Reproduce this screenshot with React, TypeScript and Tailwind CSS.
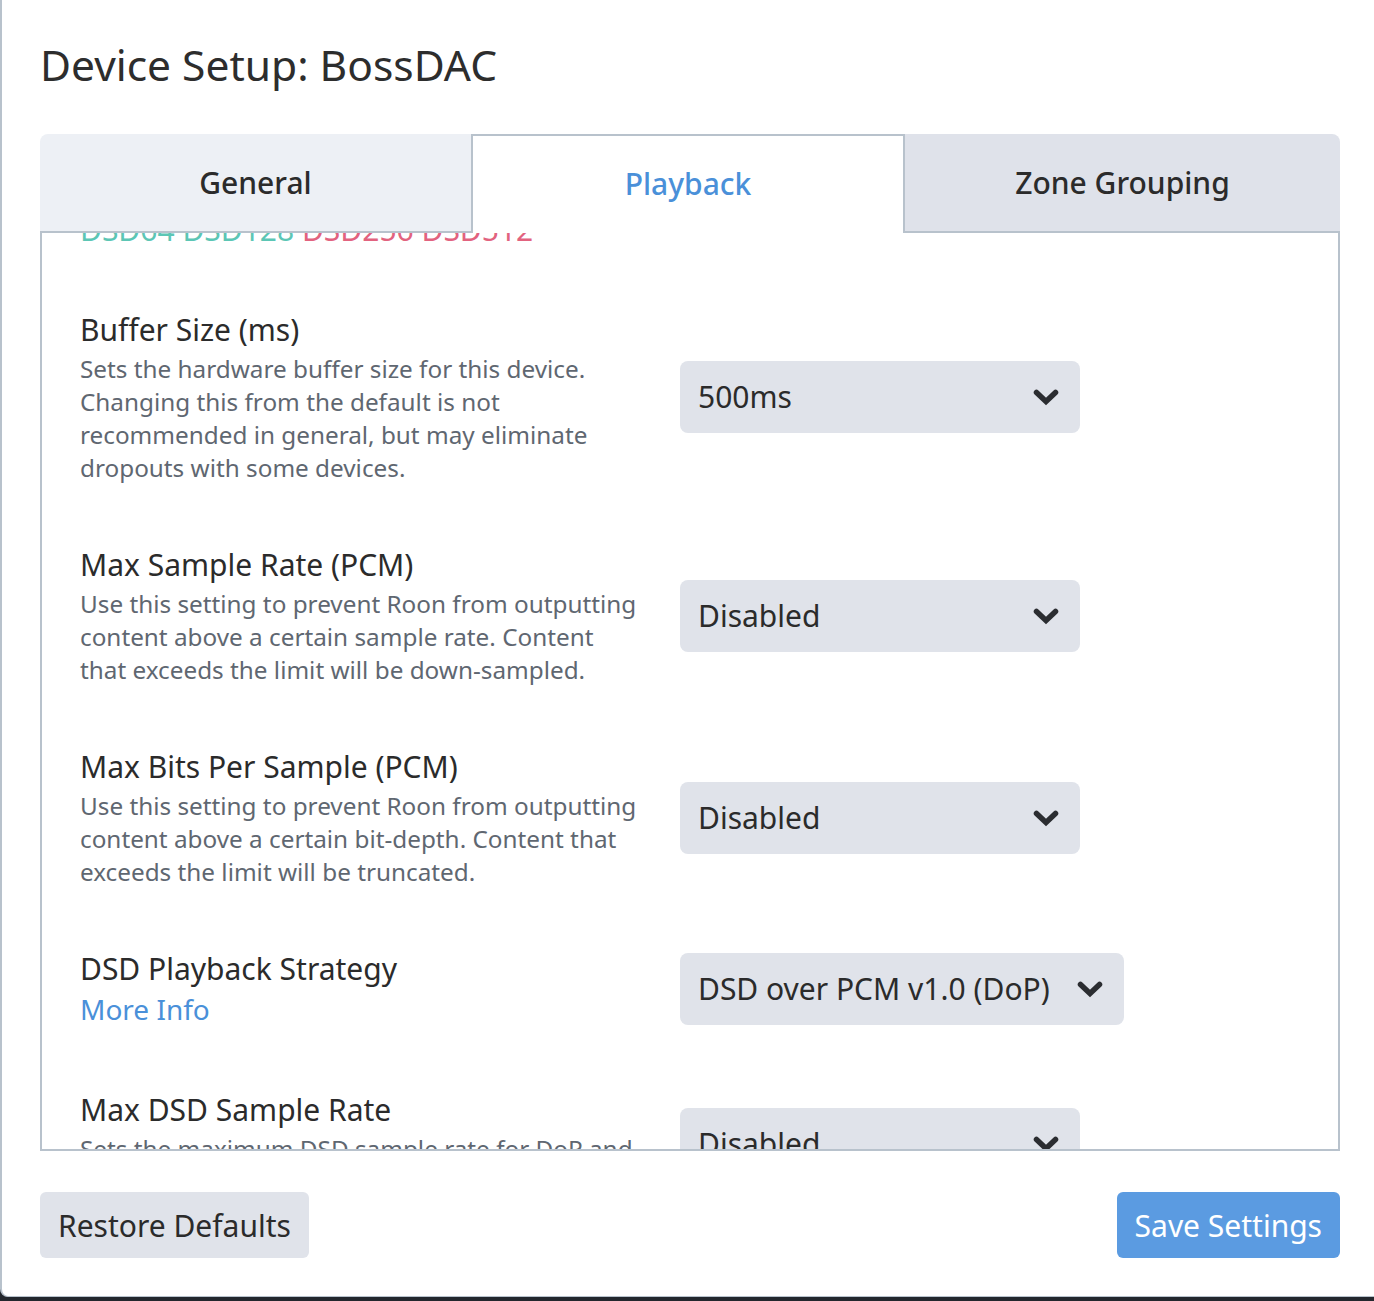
import React from "react";

function Chevron() {
  return (
    <svg width="26" height="18" viewBox="0 0 26 18" className="shrink-0">
      <path
        d="M3.5 4.5 L13 13.5 L22.5 4.5"
        fill="none"
        stroke="#2b2d31"
        strokeWidth="5.5"
        strokeLinecap="round"
        strokeLinejoin="miter"
      />
    </svg>
  );
}

function Select({ value }: { value: string }) {
  return (
    <div className="inline-flex h-[72px] min-w-[400px] items-center justify-between gap-[27px] rounded-[8px] bg-[#e0e3ea] pl-[18px] pr-[21px]">
      <span className="text-[30px] leading-[40px] text-[#2b2b2b]">{value}</span>
      <Chevron />
    </div>
  );
}

function Row({
  label,
  desc,
  link,
  value,
}: {
  label: string;
  desc?: string;
  link?: string;
  value: string;
}) {
  return (
    <div className="flex items-center">
      <div className="w-[600px] shrink-0">
        <div className="text-[30px] leading-[40px] text-[#2b2b2b]">{label}</div>
        {desc && (
          <div className="w-[560px] pt-[2px] text-[24.3px] leading-[33px] text-[#5f6771]">{desc}</div>
        )}
        {link && (
          <div className="text-[28px] leading-[40px] text-[#4a90d9]">{link}</div>
        )}
      </div>
      <div>
        <Select value={value} />
      </div>
    </div>
  );
}

export default function App() {
  return (
    <div className="h-[1301px] w-[1374px] bg-[#23272d] font-['Noto_Sans',sans-serif]">
      <div className="h-[1297px] w-[1374px] rounded-bl-[8px] border-b-[1px] border-l-[2px] border-[#b8c2cc] bg-white pl-[38px]">
        <h1 className="pt-[35px] text-[42.5px] leading-[60px] text-[#2d2d2d]">Device Setup: BossDAC</h1>

        <div className="mt-[39px] w-[1300px]">
          <div className="grid h-[99px] grid-cols-[431px_434px_435px]">
            <div className="flex items-center justify-center rounded-tl-[8px] border-b-[2px] border-[#b8c2cc] bg-[#edf0f5] text-[30px] font-medium text-[#2b2b2b]">
              General
            </div>
            <div className="flex items-center justify-center border-x-[2px] border-t-[2px] border-[#b8c2cc] bg-white pb-[2px] text-[30px] font-medium text-[#4a90d9]">
              Playback
            </div>
            <div className="flex items-center justify-center rounded-tr-[8px] border-b-[2px] border-[#b8c2cc] bg-[#dfe2ea] text-[30px] font-medium text-[#2b2b2b]">
              Zone Grouping
            </div>
          </div>

          <div className="h-[918px] overflow-hidden border-x-[2px] border-b-[2px] border-[#b8c2cc] pl-[38px]">
            <div className="-mt-[23px]">
              <div className="text-[30px] leading-[40px]">
                <span className="text-[#5cc6b5]">DSD64 DSD128</span>{" "}
                <span className="text-[#e2637f]">DSD256 DSD512</span>
              </div>
              <div className="mt-[60px] flex flex-col gap-[61px]">
                <Row
                  label="Buffer Size (ms)"
                  desc="Sets the hardware buffer size for this device. Changing this from the default is not recommended in general, but may eliminate dropouts with some devices."
                  value="500ms"
                />
                <Row
                  label="Max Sample Rate (PCM)"
                  desc="Use this setting to prevent Roon from outputting content above a certain sample rate. Content that exceeds the limit will be down-sampled."
                  value="Disabled"
                />
                <Row
                  label="Max Bits Per Sample (PCM)"
                  desc="Use this setting to prevent Roon from outputting content above a certain bit-depth. Content that exceeds the limit will be truncated."
                  value="Disabled"
                />
                <Row label="DSD Playback Strategy" link="More Info" value="DSD over PCM v1.0 (DoP)" />
                <Row
                  label="Max DSD Sample Rate"
                  desc="Sets the maximum DSD sample rate for DoP and native DSD playback."
                  value="Disabled"
                />
              </div>
            </div>
          </div>

          <div className="mt-[41px] flex items-center justify-between">
            <button className="h-[66px] rounded-[6px] bg-[#e0e3ea] px-[18px] text-[30px] text-[#2b2b2b]">
              Restore Defaults
            </button>
            <button className="h-[66px] rounded-[6px] bg-[#5b9be1] px-[18px] text-[30px] text-white">
              Save Settings
            </button>
          </div>
        </div>
      </div>
    </div>
  );
}
